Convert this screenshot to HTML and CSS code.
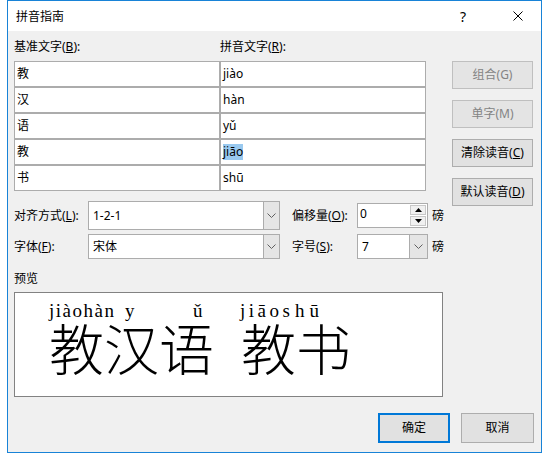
FILE: index.html
```html
<!DOCTYPE html>
<html lang="zh">
<head>
<meta charset="utf-8">
<title>拼音指南</title>
<link rel="stylesheet" href="styles.css">
</head>
<body>
<div class="window">
  <div class="titlebar">
    <span class="title">拼音指南</span>
    <span class="cap help">?</span>
    <span class="cap close"><svg width="10" height="10" viewBox="0 0 10 10"><path d="M0.5 0.5 L9.5 9.5 M9.5 0.5 L0.5 9.5" stroke="#000" stroke-width="1" fill="none"/></svg></span>
  </div>
  <div class="content">
    <div class="heads">
      <span class="head-base">基准文字(<u>B</u>):</span>
      <span class="head-py">拼音文字(<u>R</u>):</span>
    </div>
    <div class="main">
      <div class="grid">
        <div class="cell">教</div><div class="cell">jiào</div>
        <div class="cell">汉</div><div class="cell">hàn</div>
        <div class="cell">语</div><div class="cell">yǔ</div>
        <div class="cell">教</div><div class="cell"><span class="sel">jiāo</span></div>
        <div class="cell">书</div><div class="cell">shū</div>
      </div>
      <div class="side">
        <div class="btn disabled">组合(G)</div>
        <div class="btn disabled">单字(M)</div>
        <div class="btn">清除读音(<u>C</u>)</div>
        <div class="btn">默认读音(<u>D</u>)</div>
      </div>
    </div>
    <div class="opts">
      <span class="lbl">对齐方式(<u>L</u>):</span>
      <div class="combo tall"><span class="val">1-2-1</span><span class="drop"><svg width="9" height="5" viewBox="0 0 9 5"><path d="M0.5 0.5 L4.5 4.5 L8.5 0.5" stroke="#606060" fill="none"/></svg></span></div>
      <span class="lbl lbl2">偏移量(<u>O</u>):</span>
      <div class="spin"><span class="val">0</span><span class="spinbtns"><span class="sb"><svg width="7" height="4" viewBox="0 0 7 4"><path d="M0 4 L3.5 0 L7 4 Z" fill="#000"/></svg></span><span class="sb"><svg width="7" height="4" viewBox="0 0 7 4"><path d="M0 0 L3.5 4 L7 0 Z" fill="#000"/></svg></span></span></div>
      <span class="unit">磅</span>

      <span class="lbl">字体(<u>F</u>):</span>
      <div class="combo"><span class="val">宋体</span><span class="drop"><svg width="9" height="5" viewBox="0 0 9 5"><path d="M0.5 0.5 L4.5 4.5 L8.5 0.5" stroke="#606060" fill="none"/></svg></span></div>
      <span class="lbl lbl2">字号(<u>S</u>):</span>
      <div class="combo small"><span class="val">7</span><span class="drop"><svg width="9" height="5" viewBox="0 0 9 5"><path d="M0.5 0.5 L4.5 4.5 L8.5 0.5" stroke="#606060" fill="none"/></svg></span></div>
      <span class="unit">磅</span>
    </div>
    <div class="plabel">预览</div>
    <div class="preview">
      <div class="py"><span class="pa">jiàohàn</span><span class="py-y">y</span><span class="pb">ǔ</span><span class="pc">jiāo</span><span class="pd">shū</span></div>
      <div class="hz"><span>教汉语</span><span class="gap"></span><span>教书</span></div>
    </div>
    <div class="footer">
      <div class="btn ok">确定</div>
      <div class="btn cancel">取消</div>
    </div>
  </div>
</div>
</body>
</html>
```

FILE: styles.css
```css
* { box-sizing: border-box; }
html, body { margin: 0; padding: 0; background: #fff; }
body {
  font-family: "Noto Sans", "Noto Sans CJK SC", sans-serif;
  font-size: 12px;
  color: #000;
}
u { text-decoration: underline; text-underline-offset: 1px; }

.window {
  margin-left: 7px;
  width: 535px;
  height: 453px;
  border: 1px solid #1883d7;
  background: #f0f0f0;
  display: flex;
  flex-direction: column;
}

.titlebar {
  height: 30px;
  background: #fff;
  display: flex;
  align-items: center;
}
.title { padding-left: 8px; flex: 1; font-size: 12px; line-height: 16px; margin-top: 1px; }
.cap { width: 46px; height: 30px; display: flex; align-items: center; justify-content: center; }
.help { font-size: 14px; width: 36px; margin-right: 14px; }
.close svg { display: block; margin-top: -1px; }

.content { padding: 0 7px 0 6px; display: flex; flex-direction: column; }

.heads { display: flex; margin-top: 8px; line-height: 16px; height: 16px; }
.head-base { width: 206px; }

.main { display: flex; align-items: flex-start; margin-top: 6px; height: 130px; }
.grid {
  display: grid;
  grid-template-columns: 206px 206px;
  grid-auto-rows: 26px;
}
.cell {
  border: 1px solid #acacac;
  background: #fff;
  padding-left: 2px;
  display: flex;
  align-items: center;
  line-height: 16px;
}
.sel { background: #99c9ef; }

.side {
  margin-left: 26px;
  display: flex;
  flex-direction: column;
  gap: 11px;
}
.btn {
  width: 81px;
  height: 28px;
  border: 1px solid #adadad;
  background: #e1e1e1;
  display: flex;
  align-items: center;
  justify-content: center;
  line-height: 16px;
}
.btn.disabled { color: #838383; border-color: #bfbfbf; background: #e4e4e4; }

.opts {
  margin-top: 10px;
  display: grid;
  grid-template-columns: 74px 192px 77px 71px auto;
  grid-template-rows: 29px 25px;
  row-gap: 4px;
  align-items: center;
}
.lbl { line-height: 16px; }
.lbl2 { padding-left: 12px; }
.unit { padding-left: 4px; line-height: 16px; }

.combo {
  height: 25px;
  border: 1px solid #acacac;
  background: #fff;
  display: flex;
  align-items: stretch;
}
.combo.tall { height: 29px; }
.combo .val { flex: 1; padding-left: 4px; display: flex; align-items: center; line-height: 16px; }
.drop {
  width: 16px;
  background: #e5e5e5;
  border-left: 1px solid #acacac;
  display: flex;
  align-items: center;
  justify-content: center;
}
.combo.small .drop { width: 18px; }

.spin {
  height: 25px;
  border: 1px solid #acacac;
  background: #fff;
  display: flex;
}
.spin .val { flex: 1; padding-left: 2px; padding-top: 2px; line-height: 16px; }
.spinbtns { width: 17px; display: flex; flex-direction: column; padding: 1px 1px 1px 0; gap: 1px; }
.sb {
  flex: 1;
  border: 1px solid #c8c8c8;
  background: #f0f0f0;
  display: flex;
  align-items: center;
  justify-content: center;
}

.plabel { margin-top: 12px; line-height: 16px; }

.preview {
  margin-top: 5px;
  width: 429px;
  height: 105px;
  border: 1px solid #828282;
  background: #fff;
  padding-top: 8px;
  padding-left: 34px;
}
.py {
  display: flex;
  font-family: "Liberation Serif", serif;
  font-size: 19px;
  line-height: 20px;
  height: 20px;
}
.pa { width: 76px; letter-spacing: 1.5px; }
.py-y { width: 68px; }
.pb { width: 47px; }
.pc { letter-spacing: 3.5px; }
.pd { letter-spacing: 5px; }
.hz {
  display: flex;
  font-family: "Noto Sans CJK SC", sans-serif;
  font-weight: 300;
  font-size: 55px;
  line-height: 55px;
  height: 55px;
  margin-top: -2px;
}
.gap { width: 27px; }

.footer {
  margin-top: 16px;
  display: flex;
  justify-content: flex-end;
  gap: 11px;
}
.footer .btn { height: 30px; }
.btn.ok { width: 72px; border: 2px solid #0078d7; }
.btn.cancel { width: 73px; }
```
